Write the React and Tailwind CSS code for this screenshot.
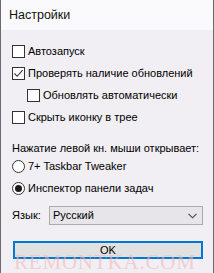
import React from "react";

function Check({ checked }) {
  return (
    <div className="w-[13px] h-[13px] border border-[#333333] bg-white flex items-center justify-center shrink-0">
      {checked && (
        <svg width="11" height="11" viewBox="0 0 11 11">
          <path d="M1.5 5.5 L4.2 8.3 L9.6 2.2" fill="none" stroke="#333" strokeWidth="1.1" />
        </svg>
      )}
    </div>
  );
}

function Radio({ checked }) {
  return (
    <div className="w-[13px] h-[13px] rounded-full border border-[#333333] bg-white flex items-center justify-center shrink-0">
      {checked && <div className="w-[7px] h-[7px] rounded-full bg-[#1a1a1a]" />}
    </div>
  );
}

export default function App() {
  return (
    <div
      className="relative w-[214px] h-[273px] overflow-hidden bg-[#f1eff3] border-x border-[#6b6b6b] text-[11px] text-black whitespace-nowrap"
      style={{ fontFamily: '"Liberation Sans", Arial, sans-serif' }}
    >
      <div className="h-[30px] bg-[#fafafc] flex items-center pl-[8px] text-[12.5px] text-[#111]">Настройки</div>
      <div className="pl-[11px] pr-[10px] pt-[15px] flex flex-col">
        <label className="flex items-center gap-[3px] h-[13px] leading-none">
          <Check />
          <span>Автозапуск</span>
        </label>
        <label className="flex items-center gap-[3px] h-[13px] mt-[9px] leading-none">
          <Check checked />
          <span>Проверять наличие обновлений</span>
        </label>
        <label className="flex items-center gap-[3px] h-[13px] mt-[9px] pl-[15px] leading-none">
          <Check />
          <span>Обновлять автоматически</span>
        </label>
        <label className="flex items-center gap-[3px] h-[13px] mt-[9px] leading-none">
          <Check />
          <span>Скрыть иконку в трее</span>
        </label>
        <div className="mt-[17px] h-[14px] flex items-center leading-none">Нажатие левой кн. мыши открывает:</div>
        <label className="flex items-center gap-[3px] h-[13px] mt-[5px] leading-none">
          <Radio />
          <span>7+ Taskbar Tweaker</span>
        </label>
        <label className="flex items-center gap-[3px] h-[13px] mt-[9px] leading-none">
          <Radio checked />
          <span>Инспектор панели задач</span>
        </label>
        <div className="flex items-center mt-[11px] h-[19px]">
          <span className="w-[37px] leading-none">Язык:</span>
          <div className="flex-1 h-[19px] border border-[#acacac] bg-[#e7e5e9] flex items-center justify-between pl-[3px] pr-[5px] leading-none">
            <span>Русский</span>
            <svg width="9" height="6" viewBox="0 0 9 6">
              <path d="M0.5 0.8 L4.5 4.8 L8.5 0.8" fill="none" stroke="#444" strokeWidth="1.1" />
            </svg>
          </div>
        </div>
        <div className="mt-[16px] ml-[1px] h-[18px] border-2 border-[#0078d7] bg-[#e1e1e1] flex items-center justify-center leading-none">
          OK
        </div>
      </div>
      <div
        className="absolute left-[13px] top-[252px] text-[21px] leading-none text-[#f3b8b8] opacity-60 pointer-events-none tracking-[0.8px]"
        style={{ fontFamily: '"Liberation Serif", serif' }}
      >
        REMONTKA.COM
      </div>
    </div>
  );
}
